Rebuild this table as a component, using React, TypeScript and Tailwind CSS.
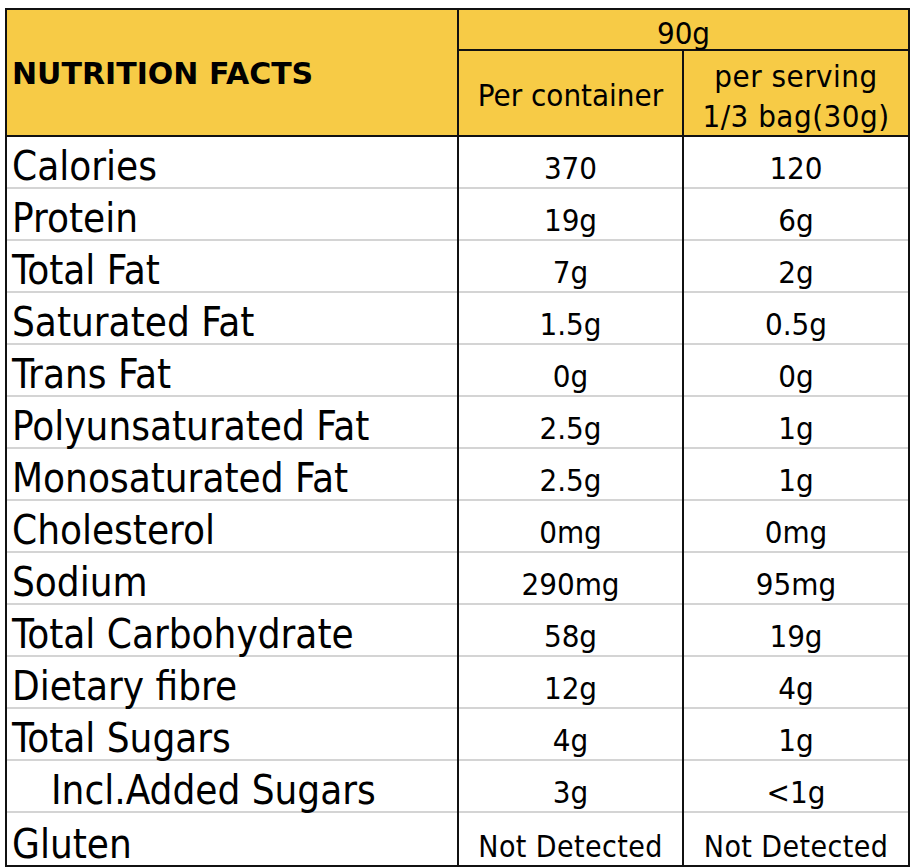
const rows: { label: string; perContainer: string; perServing: string; indent?: boolean; small?: boolean }[] = [
  { label: 'Calories', perContainer: '370', perServing: '120' },
  { label: 'Protein', perContainer: '19g', perServing: '6g' },
  { label: 'Total Fat', perContainer: '7g', perServing: '2g' },
  { label: 'Saturated Fat', perContainer: '1.5g', perServing: '0.5g' },
  { label: 'Trans Fat', perContainer: '0g', perServing: '0g' },
  { label: 'Polyunsaturated Fat', perContainer: '2.5g', perServing: '1g' },
  { label: 'Monosaturated Fat', perContainer: '2.5g', perServing: '1g' },
  { label: 'Cholesterol', perContainer: '0mg', perServing: '0mg' },
  { label: 'Sodium', perContainer: '290mg', perServing: '95mg' },
  { label: 'Total Carbohydrate', perContainer: '58g', perServing: '19g' },
  { label: 'Dietary fibre', perContainer: '12g', perServing: '4g' },
  { label: 'Total Sugars', perContainer: '4g', perServing: '1g' },
  { label: 'Incl.Added Sugars', perContainer: '3g', perServing: '<1g', indent: true },
  { label: 'Gluten', perContainer: 'Not Detected', perServing: 'Not Detected', small: true },
]

function ValueCell({ value, small, last }: { value: string; small?: boolean; last: boolean }) {
  return (
    <div
      className={`flex h-[52px] items-end justify-center ${last ? 'h-[50px]' : 'border-b-2 border-[#d4d4d4]'} ${
        small ? 'pb-[3px] text-[30px] tracking-[0.4px]' : 'pb-[3px] text-[31px]'
      } leading-none`}
    >
      {value}
    </div>
  )
}

export default function App() {
  return (
    <div className="min-h-screen bg-white pl-[5px] pt-[8px] text-black [font-family:'DejaVu_Sans_Condensed','DejaVu_Sans',sans-serif]">
      <div className="w-[905px] border-2 border-[#111]">
        {/* header */}
        <div className="flex h-[127px] border-b-2 border-[#111] bg-[#f7cb46]">
          <div className="flex w-[452px] items-center border-r-2 border-[#111] pl-[5px] pt-[2px] text-[30px] font-bold [font-family:'DejaVu_Sans',sans-serif]">
            NUTRITION FACTS
          </div>
          <div className="flex flex-1 flex-col">
            <div className="flex h-[41px] shrink-0 items-end justify-center border-b-2 border-[#111] text-[31px] leading-none">
              90g
            </div>
            <div className="flex min-h-0 flex-1">
              <div className="flex w-[225px] items-center justify-center border-r-2 border-[#111] pt-[4px] text-[31px]">
                Per container
              </div>
              <div className="flex flex-1 flex-col items-center justify-center pt-[6px] text-[31px] leading-[40px] tracking-[0.5px]">
                <span>per serving</span>
                <span>1/3 bag(30g)</span>
              </div>
            </div>
          </div>
        </div>

        {/* body */}
        <div className="flex">
          <div className="w-[452px] border-r-2 border-[#111]">
            {rows.map((r, i) => (
              <div
                key={r.label}
                className={`flex h-[52px] items-end ${i === rows.length - 1 ? 'h-[50px]' : 'border-b-2 border-[#d4d4d4]'} ${
                  r.indent ? 'pl-[44px]' : 'pl-[5px]'
                } pb-[1px] text-[40px] leading-none`}
              >
                {r.label}
              </div>
            ))}
          </div>
          <div className="w-[225px] border-r-2 border-[#111]">
            {rows.map((r, i) => (
              <ValueCell key={r.label} value={r.perContainer} small={r.small} last={i === rows.length - 1} />
            ))}
          </div>
          <div className="flex-1">
            {rows.map((r, i) => (
              <ValueCell key={r.label} value={r.perServing} small={r.small} last={i === rows.length - 1} />
            ))}
          </div>
        </div>
      </div>
    </div>
  )
}
